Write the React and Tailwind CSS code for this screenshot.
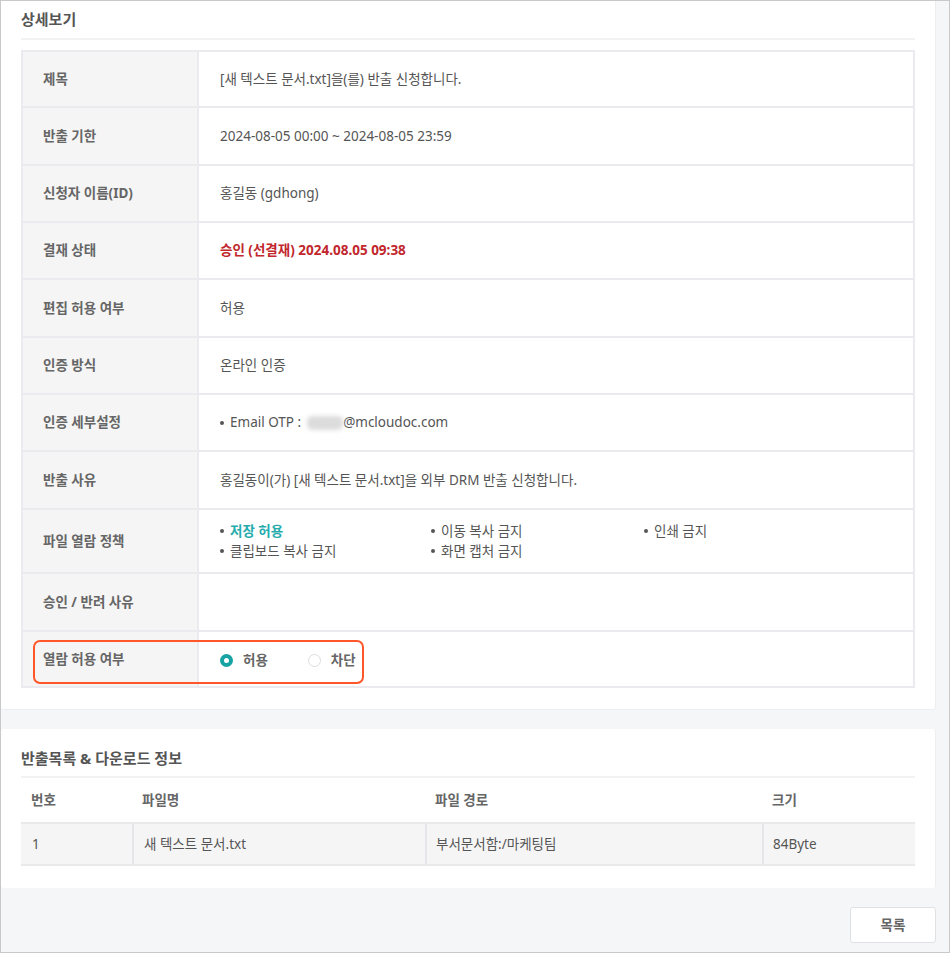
import React from "react";

const font = { fontFamily: '"Noto Sans", "Noto Sans CJK KR", sans-serif' };

function Radio({ checked, label }) {
  return (
    <span className="flex items-center gap-[10px]">
      {checked ? (
        <span className="w-[13px] h-[13px] rounded-full border-[4px] border-[#17a3a3] bg-white" />
      ) : (
        <span className="w-[13px] h-[13px] rounded-full border border-[#dcdde0] bg-white" />
      )}
      <span className="text-[13.5px] font-bold text-[#666]">{label}</span>
    </span>
  );
}

const Bullet = ({ children, className = "" }) => (
  <div className={`flex items-center gap-[6px] ${className}`}>
    <span className="w-[4px] h-[4px] rounded-full bg-[#555]" />
    <span>{children}</span>
  </div>
);

const rows = [
  { label: "제목", h: "h-[56px]", value: "[새 텍스트 문서.txt]을(를) 반출 신청합니다." },
  { label: "반출 기한", h: "h-[58px]", value: "2024-08-05 00:00 ~ 2024-08-05 23:59" },
  { label: "신청자 이름(ID)", h: "h-[57px]", value: "홍길동 (gdhong)" },
  {
    label: "결재 상태",
    h: "h-[57px]",
    value: <span className="font-bold text-[#c1272d]">승인 (선결재) 2024.08.05 09:38</span>,
  },
  { label: "편집 허용 여부", h: "h-[58px]", value: "허용" },
  { label: "인증 방식", h: "h-[57px]", value: "온라인 인증" },
  {
    label: "인증 세부설정",
    h: "h-[57px]",
    value: (
      <div className="flex items-center gap-[6px]">
        <span className="w-[4px] h-[4px] rounded-full bg-[#555]" />
        <span>Email OTP :</span>
        <span className="inline-block w-[36px] h-[14px] rounded-[5px] bg-[#dcdcdc] blur-[2px] -mr-[6px]" />
        <span>@mcloudoc.com</span>
      </div>
    ),
  },
  { label: "반출 사유", h: "h-[58px]", value: "홍길동이(가) [새 텍스트 문서.txt]을 외부 DRM 반출 신청합니다." },
  {
    label: "파일 열람 정책",
    h: "h-[64px]",
    value: (
      <div className="grid grid-cols-[211px_213px_1fr] leading-[20px]">
        <Bullet>
          <span className="font-bold text-[#26abad]">저장 허용</span>
        </Bullet>
        <Bullet>이동 복사 금지</Bullet>
        <Bullet>인쇄 금지</Bullet>
        <Bullet>클립보드 복사 금지</Bullet>
        <Bullet>화면 캡처 금지</Bullet>
      </div>
    ),
  },
  { label: "승인 / 반려 사유", h: "h-[58px]", value: "" },
];

export default function App() {
  return (
    <div
      className="w-[950px] h-[953px] bg-[#f4f6f8] border border-[#c9c9c9] flex flex-col"
      style={font}
    >
      {/* 상세보기 */}
      <div className="mr-[13px] bg-white rounded-b-[3px] border-r border-b border-[#eceef0] px-5 pt-[8px] pb-[21px]">
        <h2 className="text-[15px] font-bold text-[#555] leading-[20px] pb-[9px] border-b-2 border-[#f1f2f4]">상세보기</h2>
        <div className="mt-[10px] border-2 border-[#ebebef] text-[13.5px] text-[#555]">
          {rows.map((r) => (
            <div key={r.label} className={`flex ${r.h} border-b-2 border-[#ebebef]`}>
              <div className="w-[176px] shrink-0 bg-[#f5f5f5] border-r-2 border-[#ebebef] flex items-center pl-[20px] font-bold text-[#666]">
                {r.label}
              </div>
              <div className="flex-1 flex items-center pl-[21px]">{r.value}</div>
            </div>
          ))}
          <div className="relative flex h-[54px]">
            <div className="w-[176px] shrink-0 bg-[#f5f5f5] border-r-2 border-[#ebebef] flex items-center pl-[20px] font-bold text-[#666]">
              열람 허용 여부
            </div>
            <div className="flex-1 flex items-center pl-[21px] gap-[40px] pt-[3px]">
              <Radio checked label="허용" />
              <Radio label="차단" />
            </div>
            <div className="absolute left-[10px] top-[8px] w-[331px] h-[44px] border-2 border-[#ff572a] rounded-[7px]" />
          </div>
        </div>
      </div>

      {/* 반출목록 & 다운로드 정보 */}
      <div className="mt-[19px] mr-[13px] bg-white rounded-[3px] border-r border-[#eceef0] px-5 pt-[19px] pb-[22px]">
        <h2 className="text-[15px] font-bold text-[#555] leading-[20px] pb-[8px] border-b-2 border-[#f1f2f4]">
          반출목록 &amp; 다운로드 정보
        </h2>
        <div className="grid grid-cols-[111px_293px_337px_1fr] text-[13.5px]">
          {["번호", "파일명", "파일 경로", "크기"].map((h) => (
            <div key={h} className="h-[44px] flex items-center pl-[10px] font-bold text-[#666]">
              {h}
            </div>
          ))}
        </div>
        <div className="grid grid-cols-[111px_293px_337px_1fr] text-[13.5px] text-[#555] bg-[#f5f5f6] border-y-2 border-[#e9e9ec]">
          <div className="h-[40px] flex items-center pl-[11px]">1</div>
          <div className="h-[40px] flex items-center pl-[10px] border-l-2 border-[#e6e6ea]">새 텍스트 문서.txt</div>
          <div className="h-[40px] flex items-center pl-[9px] border-l-2 border-[#e6e6ea]">부서문서함:/마케팅팀</div>
          <div className="h-[40px] flex items-center pl-[9px] border-l-2 border-[#e6e6ea]">84Byte</div>
        </div>
      </div>

      <div className="mr-[13px] mt-[19px] flex justify-end">
        <button className="w-[86px] h-[36px] bg-white border border-[#dfe1e4] rounded-[3px] text-[13.5px] font-bold text-[#666]">
          목록
        </button>
      </div>
    </div>
  );
}
